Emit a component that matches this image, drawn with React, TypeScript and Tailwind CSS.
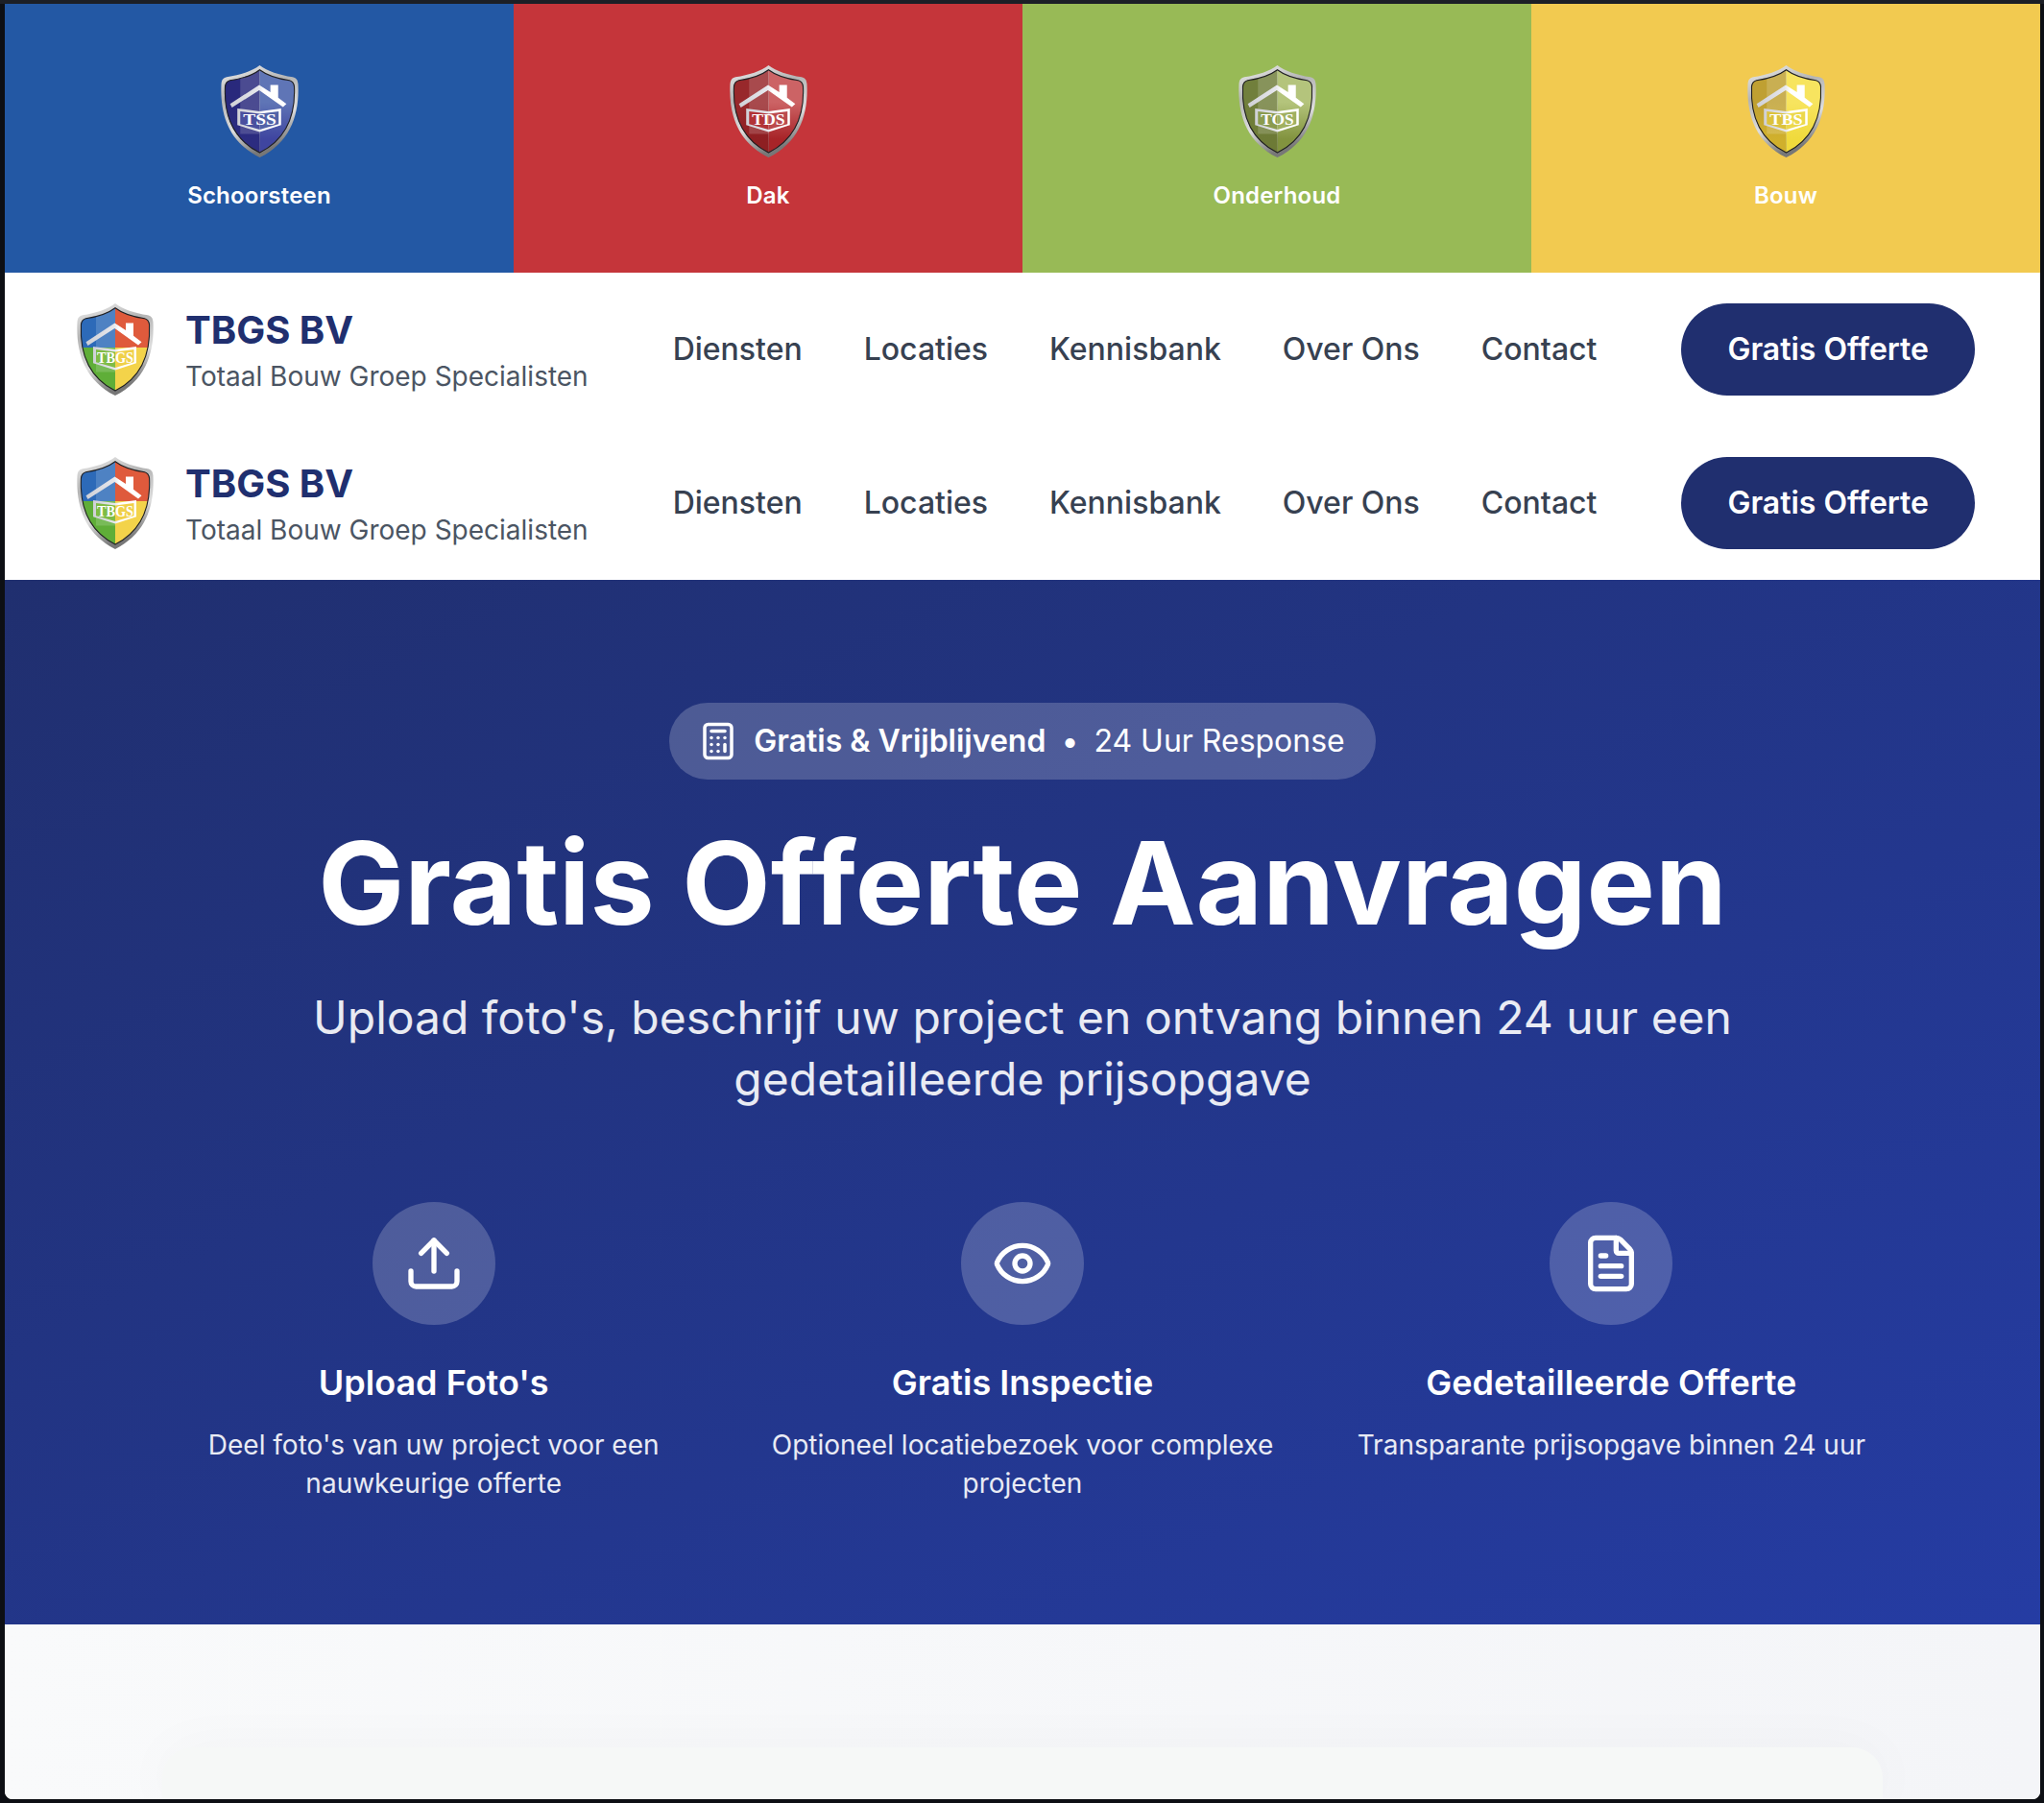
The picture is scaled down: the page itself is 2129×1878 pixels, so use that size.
import { Calculator, Eye, FileText, Upload } from 'lucide-react'

interface ShieldColors {
	topLeft: string
	bottomLeft: string
	topRight: string
	bottomRight: string
	panelLeft: string
	panelRight: string
	fade: [number, number]
}

const tiles: { name: string; bg: string; letters: string; colors: ShieldColors }[] = [
	{
		name: 'Schoorsteen',
		bg: 'bg-[#2358a4]',
		letters: 'TSS',
		colors: { topLeft: '#29297c', bottomLeft: '#2c2c80', topRight: '#5f75b6', bottomRight: '#3f45a0', panelLeft: '#4a4f9e', panelRight: '#5263a8', fade: [0.4, 0.8] },
	},
	{
		name: 'Dak',
		bg: 'bg-[#c5353a]',
		letters: 'TDS',
		colors: { topLeft: '#98282b', bottomLeft: '#8e1f22', topRight: '#cc6365', bottomRight: '#a82428', panelLeft: '#b23236', panelRight: '#bb4a4d', fade: [0.4, 0.8] },
	},
	{
		name: 'Onderhoud',
		bg: 'bg-[#98ba56]',
		letters: 'TOS',
		colors: { topLeft: '#717f3c', bottomLeft: '#6d7a36', topRight: '#b4c47c', bottomRight: '#82933f', panelLeft: '#8b9b4f', panelRight: '#a0b060', fade: [0.4, 0.8] },
	},
	{
		name: 'Bouw',
		bg: 'bg-[#f2ca50]',
		letters: 'TBS',
		colors: { topLeft: '#bfa032', bottomLeft: '#d0b02c', topRight: '#f7e45f', bottomRight: '#f0da3c', panelLeft: '#dcc23c', panelRight: '#ecd84c', fade: [0.4, 0.8] },
	},
]

const logoColors: ShieldColors = {
	topLeft: '#2d6ab8',
	bottomLeft: '#5fae38',
	topRight: '#df5a3c',
	bottomRight: '#f3d34a',
	panelLeft: '#7fbc45',
	panelRight: '#f0d048',
	fade: [0.48, 0.48],
}

const navLinks = ['Diensten', 'Locaties', 'Kennisbank', 'Over Ons', 'Contact']

const features = [
	{ icon: Upload, title: "Upload Foto's", text: "Deel foto's van uw project voor een nauwkeurige offerte" },
	{ icon: Eye, title: 'Gratis Inspectie', text: 'Optioneel locatiebezoek voor complexe projecten' },
	{ icon: FileText, title: 'Gedetailleerde Offerte', text: 'Transparante prijsopgave binnen 24 uur' },
]

const SHIELD = 'M40 0 C48 6 60 10 74 12 C78 13 79 15 79.5 19 C81 50 72 78 40 94 C8 78 -1 50 0.5 19 C1 15 2 13 6 12 C20 10 32 6 40 0 Z'

function Shield({ id, letters, colors, className }: { id: string; letters: string; colors: ShieldColors; className: string }) {
	const [a, b] = colors.fade
	return (
		<svg viewBox="0 0 80 94" preserveAspectRatio="none" className={className}>
			<defs>
				<linearGradient id={`rim-${id}`} x1="0" y1="0" x2="0.3" y2="1">
					<stop offset="0" stopColor="#f2f2f2" />
					<stop offset="0.35" stopColor="#b4b4b4" />
					<stop offset="0.7" stopColor="#dddddd" />
					<stop offset="1" stopColor="#777777" />
				</linearGradient>
				<linearGradient id={`left-${id}`} x1="0" y1="0" x2="0" y2="1">
					<stop offset={a} stopColor={colors.topLeft} />
					<stop offset={b} stopColor={colors.bottomLeft} />
				</linearGradient>
				<linearGradient id={`right-${id}`} x1="0" y1="0" x2="0" y2="1">
					<stop offset={a} stopColor={colors.topRight} />
					<stop offset={b} stopColor={colors.bottomRight} />
				</linearGradient>
				<linearGradient id={`roof-${id}`} x1="0" y1="0" x2="1" y2="0">
					<stop offset="0" stopColor="#cfd0d6" />
					<stop offset="0.5" stopColor="#e6e7ec" />
					<stop offset="0.6" stopColor="#ffffff" />
				</linearGradient>
				<clipPath id={`clip-${id}`}>
					<path d={SHIELD} transform="translate(40 46) scale(0.9) translate(-40 -46)" />
				</clipPath>
			</defs>
			<path d={SHIELD} fill={`url(#rim-${id})`} />
			<g clipPath={`url(#clip-${id})`}>
				<rect x="0" y="0" width="40" height="94" fill={`url(#left-${id})`} />
				<rect x="40" y="0" width="40" height="94" fill={`url(#right-${id})`} />
				<rect x="20" y="0" width="20" height="70" fill="#ffffff" opacity="0.16" />
			</g>
			<path d={SHIELD} transform="translate(40 46) scale(0.9) translate(-40 -46)" fill="none" stroke="#1f1f22" strokeWidth="1.2" />
			<path d="M9.5 39.5 L39.5 20 L51 27.5 L51 20 L59 20 L59 33 L67.5 39.5 L64 42.5 L39.5 25.5 L11.5 43 Z" fill={`url(#roof-${id})`} />
			<path d="M17 44 L40 47 L62 44 L62 61 L40 68 L17 61 Z" fill={`url(#roof-${id})`} />
			<path d="M20 47 L40 49.5 L40 65.5 L20 60 Z" fill={colors.panelLeft} />
			<path d="M40 49.5 L59.5 47 L59.5 60 L40 65.5 Z" fill={colors.panelRight} />
			<text
				x="40"
				y="60.5"
				textAnchor="middle"
				fontFamily="'Liberation Serif', serif"
				fontWeight="700"
				fontSize={letters.length > 3 ? 16 : 17}
				textLength={letters.length > 3 ? 38 : 34}
				lengthAdjust="spacingAndGlyphs"
				fill="#ffffff"
			>
				{letters}
			</text>
		</svg>
	)
}

function NavRow({ id }: { id: string }) {
	return (
		<div className="flex h-40 items-center justify-between pl-[75px] pr-[68px]">
			<div className="flex items-center gap-[33px]">
				<Shield id={id} letters="TBGS" colors={logoColors} className="h-[96px] w-[80px] shrink-0" />
				<div className="flex flex-col">
					<span className="mt-[3px] text-[40px] leading-[50px] font-bold text-[#202f6f]">TBGS BV</span>
					<span className="mt-[3px] text-[28px] leading-[40px] text-[#4b5563]">Totaal Bouw Groep Specialisten</span>
				</div>
			</div>
			<div className="flex items-center gap-[64px]">
				{navLinks.map(link => (
					<a key={link} className="text-[32px] font-medium text-[#374151]">
						{link}
					</a>
				))}
				<a className="ml-[24px] flex h-24 items-center rounded-full bg-[#202f6f] px-[48px] text-[32px] font-semibold text-white">Gratis Offerte</a>
			</div>
		</div>
	)
}

export default function App() {
	return (
		<div className="h-[1878px] border-t-4 border-[#1c1f26] bg-[#0d0f14] pr-1 pb-1 pl-[5px] font-['Inter',sans-serif]">
			<div className="flex h-full flex-col overflow-hidden rounded-b-[8px] bg-white">
				<div className="grid grid-cols-4">
					{tiles.map(tile => (
						<div key={tile.name} className={`flex h-[280px] flex-col items-center pt-[64px] ${tile.bg}`}>
							<Shield id={tile.name} letters={tile.letters} colors={tile.colors} className="h-[96px] w-[81px]" />
							<span className="mt-[22px] text-[24px] leading-[36px] font-semibold tracking-[0.2px] text-white">{tile.name}</span>
						</div>
					))}
				</div>
				<NavRow id="a" />
				<NavRow id="b" />
				<div className="flex h-[1088px] flex-col items-center bg-gradient-to-br from-[#202f6f] to-[#253ca3] pt-[128px] text-white">
					<div className="flex h-20 items-center gap-[16px] rounded-full bg-white/20 pr-[32px] pl-[30px] text-[32px]">
						<Calculator size={42} strokeWidth={2} />
						<span className="font-semibold">Gratis &amp; Vrijblijvend</span>
						<span>•</span>
						<span>24 Uur Response</span>
					</div>
					<h1 className="mt-[33px] text-[120px] leading-[150px] font-bold">Gratis Offerte Aanvragen</h1>
					<p className="mt-[33px] w-[1500px] text-center text-[48px] leading-[64px] font-normal text-white/90">
						Upload foto's, beschrijf uw project en ontvang binnen 24 uur een gedetailleerde prijsopgave
					</p>
					<div className="mt-[96px] grid w-[1792px] grid-cols-3 gap-[48px]">
						{features.map(feature => (
							<div key={feature.title} className="flex flex-col items-center text-center">
								<div className="flex h-32 w-32 items-center justify-center rounded-full bg-white/20">
									<feature.icon size={64} strokeWidth={2} />
								</div>
								<h3 className="mt-[30px] text-[36px] leading-[60px] font-semibold">{feature.title}</h3>
								<p className="mt-[15px] text-[28px] leading-[40px] text-white/90">{feature.text}</p>
							</div>
						))}
					</div>
				</div>
				<div className="flex flex-1 justify-center bg-gradient-to-r from-[#f9fafb] to-[#f4f5f8] pt-[128px]">
					<div className="h-full w-[1792px] rounded-t-[32px] bg-[#f6f8f7] shadow-[0_0_60px_rgba(0,0,0,0.03)]" />
				</div>
			</div>
		</div>
	)
}
